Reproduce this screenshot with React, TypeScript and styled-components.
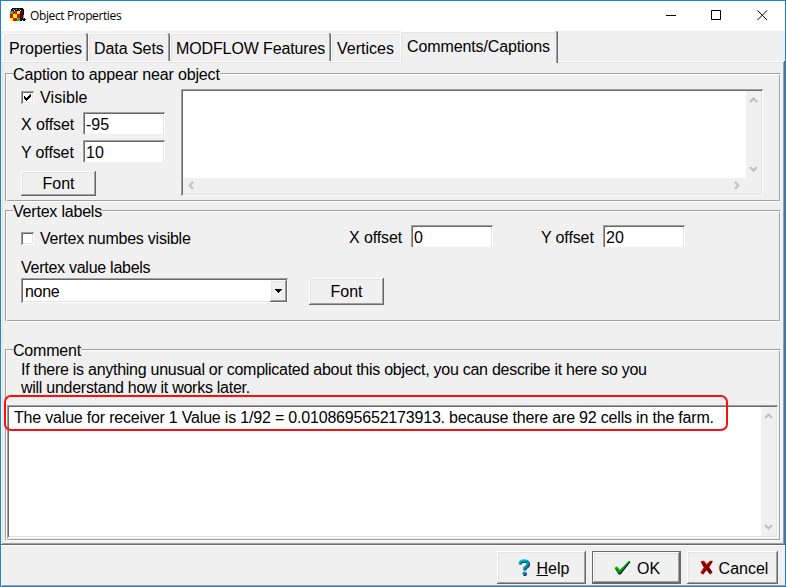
import React from "react";
import styled, { createGlobalStyle, css } from "styled-components";

const GlobalStyle = createGlobalStyle`
  * { box-sizing: border-box; }
  html, body { margin: 0; padding: 0; overflow: hidden; }
  body { background: #f0f0f0; }
`;

const raised = css`
  box-shadow: inset -1px -1px #696969, inset 1px 1px #fff,
    inset -2px -2px #a0a0a0, inset 2px 2px #e3e3e3;
`;
const sunken = css`
  box-shadow: inset 1px 1px #a0a0a0, inset -1px -1px #fff,
    inset 2px 2px #696969, inset -2px -2px #e3e3e3;
`;

const Window = styled.div`
  width: 786px;
  height: 587px;
  display: flex;
  flex-direction: column;
  border: 1px solid #1883d7;
  background: #f0f0f0;
  color: #000;
  font: 16px/18px "Liberation Sans", Arial, sans-serif;
  white-space: nowrap;
`;

const TitleBar = styled.header`
  display: flex;
  align-items: center;
  height: 30px;
  flex: none;
  padding-left: 9px;
  background: #fff;
`;
const Title = styled.h1`
  flex: 1;
  margin: 0 0 0 4px;
  font: 12px/16px "Open Sans", "Noto Sans", sans-serif;
  letter-spacing: -0.38px;
`;
const CaptionButtons = styled.div`
  display: flex;
  width: 138px;
  height: 30px;
`;

const Tabs = styled.nav`
  display: flex;
  align-items: flex-end;
  height: 30px;
  flex: none;
  padding-left: 2px;
`;
const Tab = styled.div<{ $w: number; $pad?: number; $active?: boolean; $last?: boolean; $ls?: number }>`
  width: ${(p) => p.$w}px;
  height: ${(p) => (p.$active ? 32 : 28)}px;
  margin-bottom: ${(p) => (p.$active ? -2 : 0)}px;
  padding: 7px 0 0 ${(p) => p.$pad ?? 6}px;
  position: relative;
  letter-spacing: ${(p) => p.$ls ?? 0}px;
  background: #f0f0f0;
  border-radius: 2px 2px 0 0;
  box-shadow: ${(p) =>
    p.$last
      ? "inset 1px 1px #fff, inset 2px 2px #e3e3e3"
      : "inset -1px 0 #696969, inset 1px 1px #fff, inset -2px 0 #a0a0a0, inset 2px 2px #e3e3e3"};
`;

const Page = styled.main`
  flex: none;
  height: 484px;
  padding: 12px 4px 0;
  ${raised}
`;
const Group = styled.section<{ $h: number; $gap?: number }>`
  width: 776px;
  height: ${(p) => p.$h}px;
  margin-bottom: ${(p) => p.$gap ?? 0}px;
  border: 1px solid #a0a0a0;
  border-right-color: #fff;
  border-bottom-color: #fff;
  box-shadow: inset 1px 1px #fff, inset -1px -1px #a0a0a0;
`;
const Legend = styled.h2<{ $ls?: number }>`
  width: fit-content;
  height: 17px;
  margin: -8px 0 0 7px;
  font: inherit;
  letter-spacing: ${(p) => p.$ls ?? 0}px;
  background: #f0f0f0;
`;
const Columns = styled.div`
  display: flex;
`;
const Controls = styled.div`
  width: 175px;
  padding: 8px 0 0 15px;
`;
const VertexControls = styled.div`
  padding: 5px 0 0 15px;
`;
const Row = styled.div<{ $h: number; $mt?: number }>`
  display: flex;
  height: ${(p) => p.$h}px;
  margin-top: ${(p) => p.$mt ?? 0}px;
`;
const Text = styled.span<{ $w?: number; $mt?: number; $ml?: number; $ls?: number }>`
  display: block;
  flex: none;
  width: ${(p) => (p.$w ? p.$w + "px" : "auto")};
  margin-top: ${(p) => p.$mt ?? 0}px;
  margin-left: ${(p) => p.$ml ?? 0}px;
  letter-spacing: ${(p) => p.$ls ?? 0}px;
`;
const Check = styled.span`
  flex: none;
  display: block;
  width: 13px;
  height: 13px;
  margin: 0 6px 0 0;
  padding: 2px;
  background: #fff;
  ${sunken}
  svg { display: block; }
`;
const Edit = styled.div`
  flex: none;
  width: 82px;
  height: 22px;
  padding: 4px 0 0 3px;
  margin-right: 1px;
  background: #fff;
  box-shadow: inset 1px 1px #a0a0a0, inset -1px 0 #fff,
    inset 2px 2px #696969, inset -2px 0 #e3e3e3;
`;
const Button = styled.button<{ $w: number; $h: number; $default?: boolean; $shift?: number; $drop?: number }>`
  display: flex;
  flex: none;
  align-items: center;
  justify-content: center;
  width: ${(p) => p.$w}px;
  height: ${(p) => p.$h}px;
  padding: ${(p) => p.$drop ?? 1}px 0 0 ${(p) => p.$shift ?? 0}px;
  border: 0;
  background: #f0f0f0;
  color: #000;
  font: inherit;
  ${raised}
  ${(p) =>
    p.$default &&
    css`
      box-shadow: inset 0 0 0 1px #696969, inset -2px -2px #696969,
        inset 2px 2px #fff, inset -3px -3px #a0a0a0, inset 3px 3px #e3e3e3;
    `}
`;
const Memo = styled.div<{ $w: number; $h: number }>`
  flex: none;
  display: grid;
  grid-template-columns: 1fr auto;
  grid-template-rows: 1fr auto;
  width: ${(p) => p.$w}px;
  height: ${(p) => p.$h}px;
  padding: 2px;
  background: #fff;
  ${sunken}
`;
const MemoText = styled.div`
  padding: 2px 0 0 5px;
  letter-spacing: -0.19px;
`;
const VScroll = styled.div`
  display: flex;
  flex-direction: column;
  justify-content: space-between;
  width: 15px;
  padding: 5px 0 5px 3px;
  background: #f0f0f0;
  svg { display: block; }
`;
const HScroll = styled.div`
  grid-column: 1 / 3;
  display: flex;
  justify-content: space-between;
  height: 16px;
  padding: 3px 20px 0 4px;
  background: #f0f0f0;
`;
const Combo = styled.div`
  display: flex;
  flex: none;
  justify-content: space-between;
  width: 267px;
  height: 25px;
  padding: 2px 1px 2px 4px;
  margin-right: 21px;
  background: #fff;
  ${sunken}
`;
const DropButton = styled.span`
  width: 17px;
  height: 22px;
  background: #f0f0f0;
  ${raised}
  svg { display: block; margin: 9px 0 0 5px; }
`;
const Note = styled.p`
  margin: 2px 0 0 15px;
  letter-spacing: -0.27px;
`;
const Footer = styled.footer`
  display: flex;
  height: 41px;
  padding: 6px 0 0 496px;
  gap: 6px;
  box-shadow: inset 1px 1px #fff, inset 0 -1px #a0a0a0;
  svg { flex: none; margin: -2px 6px 0 0; }
`;
const CommentArea = styled.div`
  position: relative;
  margin: 8px 0 0 1px;
`;
const Highlight = styled.div`
  position: absolute;
  left: -3px;
  top: -10px;
  width: 724px;
  height: 36px;
  border: 2px solid #f81010;
  border-radius: 7px;
`;

const chevrons = {
  up: ["M1 6 4.5 2.5 8 6", 9, 8],
  down: ["M1 2 4.5 5.5 8 2", 9, 8],
  left: ["M6 1 2.5 4.5 6 8", 8, 9],
  right: ["M2 1 5.5 4.5 2 8", 8, 9],
} as const;

const Chevron = ({ dir }: { dir: keyof typeof chevrons }) => {
  const [d, w, h] = chevrons[dir];
  return (
    <svg width={w} height={h} viewBox={`0 0 ${w} ${h}`}>
      <path d={d} fill="none" stroke="#bfbfbf" strokeWidth="2" />
    </svg>
  );
};

const AppIcon = () => (
  <svg width="16" height="16" viewBox="0 0 16 16" shapeRendering="crispEdges">
    <path d="M0 3h1V1h1V0h11v1h1v9h1v1h1v1h-1v1h-2v-1h-1v1H0z" fill="#000" />
    <path d="M11 3h1V2h1v8h-1v1h-1z" fill="#600000" />
    <path d="M3 1h1v1H3zM6 1h1v1H6zM9 1h1v1H9z" fill="#00c8ff" />
    <path d="M2 2h1v1H2zM5 1h1v1H5zM8 2h1v1H8z" fill="#2020ff" />
    <path d="M10 2h1v1h-1zM4 2h1v1H4z" fill="#fff" />
    <path d="M0 3h11v10H0z" fill="#ffff00" />
    <path d="M3 3h4v3H3zM0 6h3v4H0zM7 6h3v4H7zM3 10h4v3H3z" fill="#f00" />
    <path d="M0 3h3v3H0zM7 10h3v3H7z" fill="#00e020" />
    <path d="M10 3h1v10h-1z" fill="#000" />
    <path d="M13 7h1v4h-1z" fill="#909090" />
  </svg>
);

const HelpIcon = () => (
  <svg width="13" height="17" viewBox="0 0 13 17">
    <path d="M2.5 5.5Q2.5 2.5 6.7 2.5 10.8 2.5 10.8 5.4 10.8 7.3 8.7 8.4 7 9.3 7 11.5" fill="none" stroke="#000080" strokeWidth="2.4" />
    <path d="M1.8 4.8Q2 1.8 6 1.8 10 1.8 10 4.6 10 6.5 8 7.7 6.2 8.7 6.2 11" fill="none" stroke="#009498" strokeWidth="2.8" />
    <path d="M1 4Q2 1 5.7.8L9 1" fill="none" stroke="#00e8e8" strokeWidth="1" />
    <circle cx="6.9" cy="14.9" r="2" fill="#000080" />
    <circle cx="6.2" cy="14.3" r="1.7" fill="#00a0a0" />
  </svg>
);

const OkIcon = () => (
  <svg width="17" height="15" viewBox="0 0 17 15">
    <path d="M1 8.5 3.3 7.4 6 11 15.5 1.2 16.5 2 6.6 14.5 4.5 14.3Z" fill="#000058" />
    <path d="M.5 8 3 6.5 5.8 10 15 .7 16 1.3 6 13.2 4 13.2Z" fill="#009a00" />
    <path d="M1.2 8 3 7 5.8 10.8 15 1.2" fill="none" stroke="#00d000" strokeWidth=".8" />
  </svg>
);

const CancelIcon = () => (
  <svg width="13" height="15" viewBox="0 0 13 15">
    <path d="M.5 1.5 3.8.7 6.6 4.3 10.2.8 12.7 1 12.4 2.3 9.2 7.2 12.6 12.2 10.2 14.4 6.4 10.3 3.3 14.4.4 13 3.8 7.5Z" fill="#800000" />
    <path d="M1 2 3.6 1.3 6.7 5.3 10.8 1.3M5 7.5 1.2 12.6" fill="none" stroke="#d80000" strokeWidth="1.1" />
  </svg>
);

export default function App() {
  return (
    <>
      <GlobalStyle />
      <Window>
        <TitleBar>
          <AppIcon />
          <Title>Object Properties</Title>
          <CaptionButtons>
            <svg width="138" height="30" viewBox="0 0 138 30" fill="none" stroke="#000">
              <path d="M19 14.5h10M64.5 9.5h9v9h-9zM110.5 9.5l9.5 9.5M120 9.5l-9.5 9.5" />
            </svg>
          </CaptionButtons>
        </TitleBar>
        <Tabs>
          <Tab $w={85}>Properties</Tab>
          <Tab $w={82} $ls={-0.05}>Data Sets</Tab>
          <Tab $w={161} $ls={-0.12}>MODFLOW Features</Tab>
          <Tab $w={69} $last>Vertices</Tab>
          <Tab $w={158} $pad={7} $ls={-0.12} $active>Comments/Captions</Tab>
        </Tabs>
        <Page>
          <Group $h={129} $gap={8}>
            <Legend $ls={-0.14}>Caption to appear near object</Legend>
            <Columns>
              <Controls>
                <Row $h={21}>
                  <Check>
                    <svg width="9" height="9" viewBox="0 0 9 9" shapeRendering="crispEdges">
                      <path d="M1 3v3l2 2 5-5V0L3 5z" fill="#000" />
                    </svg>
                  </Check>
                  <Text $mt={-2} $ls={0.1}>Visible</Text>
                </Row>
                <Row $h={28}>
                  <Text $w={62} $mt={4} $ls={-0.12}>X offset</Text>
                  <Edit>-95</Edit>
                </Row>
                <Row $h={31}>
                  <Text $w={62} $mt={4} $ls={-0.12}>Y offset</Text>
                  <Edit>10</Edit>
                </Row>
                <Button $w={75} $h={25}>Font</Button>
              </Controls>
              <Row $h={107} $mt={6}>
                <Memo $w={582} $h={107}>
                  <MemoText />
                  <VScroll><Chevron dir="up" /><Chevron dir="down" /></VScroll>
                  <HScroll><Chevron dir="left" /><Chevron dir="right" /></HScroll>
                </Memo>
              </Row>
            </Columns>
          </Group>
          <Group $h={112} $gap={27}>
            <Legend $ls={-0.2}>Vertex labels</Legend>
            <VertexControls>
              <Row $h={34}>
                <Row $h={20} $mt={7}>
                  <Check />
                  <Text $w={309} $mt={-2} $ls={-0.24}>Vertex numbes visible</Text>
                </Row>
                <Text $w={62} $mt={4} $ls={-0.12}>X offset</Text>
                <Edit>0</Edit>
                <Text $w={62} $ml={47} $mt={4} $ls={-0.12}>Y offset</Text>
                <Edit>20</Edit>
              </Row>
              <Text $ls={-0.26}>Vertex value labels</Text>
              <Row $h={27} $mt={1}>
                <Combo>
                  <Text $mt={3} $ls={-0.3}>none</Text>
                  <DropButton>
                    <svg width="7" height="4" viewBox="0 0 7 4" shapeRendering="crispEdges">
                      <path d="M0 0h7v1H6v1H5v1H4v1H3V3H2V2H1V1H0z" fill="#000" />
                    </svg>
                  </DropButton>
                </Combo>
                <Button $w={75} $h={27}>Font</Button>
              </Row>
            </VertexControls>
          </Group>
          <Group $h={192}>
            <Legend $ls={-0.2}>Comment</Legend>
            <Note>
              If there is anything unusual or complicated about this object, you can describe it here so you
              <br />
              will understand how it works later.
            </Note>
            <CommentArea>
              <Memo $w={771} $h={133}>
                <MemoText>
                  The value for receiver 1 Value is 1/92 = 0.0108695652173913. because there are 92 cells in the farm.
                </MemoText>
                <VScroll><Chevron dir="up" /><Chevron dir="down" /></VScroll>
              </Memo>
              <Highlight />
            </CommentArea>
          </Group>
        </Page>
        <Footer>
          <Button $w={89} $h={33} $shift={4} $drop={2}><HelpIcon /><span><u>H</u>elp</span></Button>
          <Button $w={89} $h={33} $shift={1} $drop={2} $default><OkIcon />OK</Button>
          <Button $w={91} $h={33} $shift={3} $drop={2}><CancelIcon />Cancel</Button>
        </Footer>
      </Window>
    </>
  );
}
